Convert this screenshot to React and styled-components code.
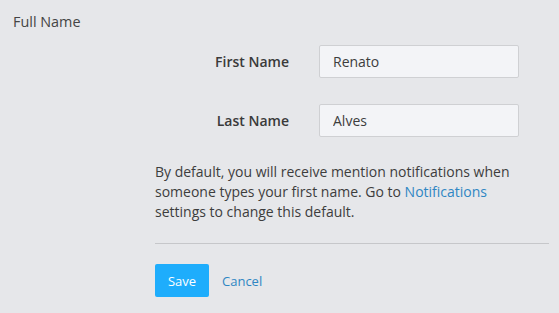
import React from 'react';
import styled, { createGlobalStyle } from 'styled-components';

const Global = createGlobalStyle`
  html, body {
    margin: 0;
    padding: 0;
    background: #e6e7ea;
  }
  body {
    font-family: "Open Sans", "DejaVu Sans", sans-serif;
    color: #3d3d3d;
  }
`;

const Section = styled.div`
  display: grid;
  grid-template-columns: 155px 1fr;
  padding: 12px 10px 16px 0;
  min-height: 313px;
  box-sizing: border-box;
`;

const Title = styled.div`
  padding-left: 13px;
  font-size: 14.4px;
  line-height: 20px;
  color: #444;
`;

const Body = styled.div`
  padding-top: 33px;
  display: flex;
  flex-direction: column;
`;

const Field = styled.div`
  display: grid;
  grid-template-columns: 164px 200px;
  align-items: center;
  margin-bottom: ${(p) => (p.$last ? '25px' : '26px')};
`;

const Label = styled.label`
  text-align: right;
  padding-right: 30px;
  font-size: 14px;
  font-weight: 600;
  color: #3a3a3a;
`;

const Input = styled.input`
  box-sizing: border-box;
  height: 33px;
  width: 200px;
  padding: 0 13px;
  border: 1px solid #cfd0d3;
  border-radius: 2px;
  background: #f3f4f7;
  font-family: inherit;
  font-size: 14px;
  color: #3d3d3d;
  outline: none;
`;

const Help = styled.p`
  margin: 0;
  font-size: 14px;
  line-height: 20px;
  color: #3d3d3d;
  padding-right: 12px;
`;

const Link = styled.a`
  color: #2f86c3;
  text-decoration: none;
`;

const Divider = styled.hr`
  margin: 21px 0 20px;
  border: none;
  border-top: 1px solid #c6c7ca;
`;

const Actions = styled.div`
  display: flex;
  align-items: center;
  gap: 13px;
`;

const SaveButton = styled.button`
  height: 33px;
  width: 54px;
  border: none;
  border-radius: 2px;
  background: #1eadfc;
  color: #fff;
  font-family: inherit;
  font-size: 13px;
`;

const CancelLink = styled.a`
  color: #2f86c3;
  font-size: 13px;
  text-decoration: none;
`;

export default function App() {
  return (
    <>
      <Global />
      <Section>
        <Title>Full Name</Title>
        <Body>
          <Field>
            <Label>First Name</Label>
            <Input defaultValue="Renato" />
          </Field>
          <Field $last>
            <Label>Last Name</Label>
            <Input defaultValue="Alves" />
          </Field>
          <Help>
            By default, you will receive mention notifications when someone types your first
            name. Go to <Link href="#">Notifications</Link> settings to change this default.
          </Help>
          <Divider />
          <Actions>
            <SaveButton>Save</SaveButton>
            <CancelLink href="#">Cancel</CancelLink>
          </Actions>
        </Body>
      </Section>
    </>
  );
}
